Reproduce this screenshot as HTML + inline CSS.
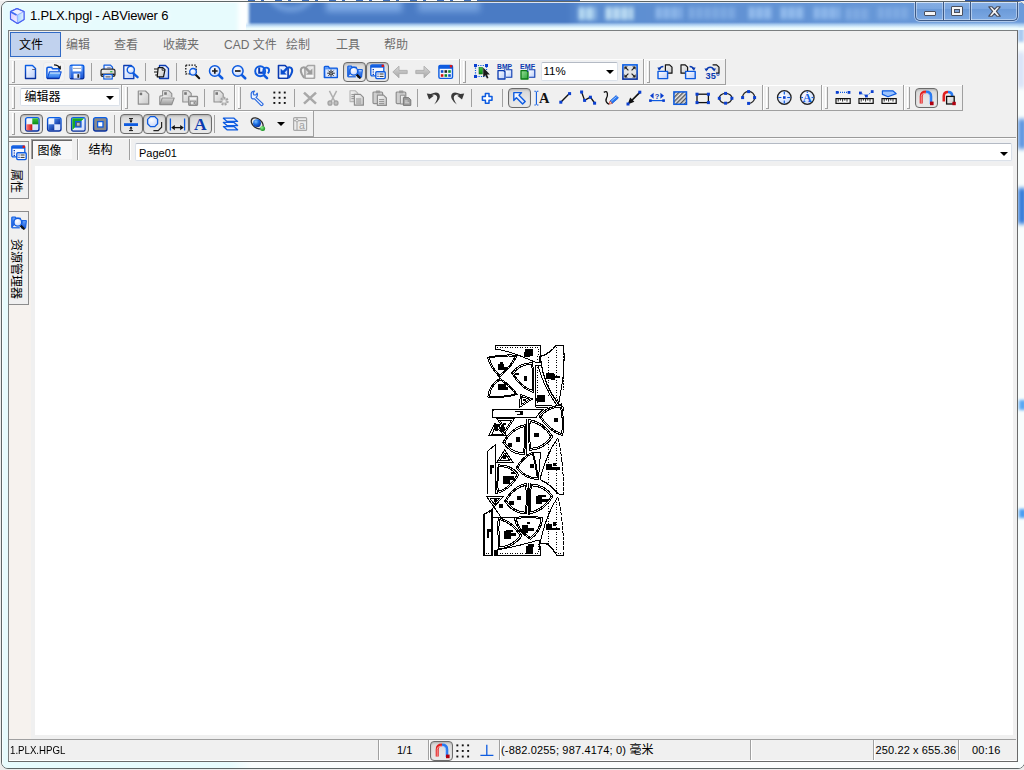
<!DOCTYPE html>
<html lang="zh-CN">
<head>
<meta charset="utf-8">
<title>1.PLX.hpgl - ABViewer 6</title>
<style>
*{box-sizing:border-box;margin:0;padding:0}
html,body{width:1024px;height:770px;overflow:hidden;background:#ececec}
body{position:relative;font-family:"Liberation Sans","Noto Sans CJK SC",sans-serif;font-size:12px;color:#000}
.abs{position:absolute}
#desk{left:0;top:0;width:1024px;height:770px;overflow:hidden}
#win{left:1px;top:1px;width:1024px;height:768px;border:1px solid #5d6566;border-radius:7px;background:#e7fbfd;overflow:hidden}
#glass{left:0;top:0;width:1024px;height:30px;overflow:hidden;clip-path:inset(2px -1px 0 2px round 6px 6px 0 0)}
#client{left:8px;top:30px;width:1010px;height:732px;background:#f0f0f0;border:1px solid #7b7f80;border-right-color:#6a6a6a;border-bottom-color:#6a6a6a}
.t{position:absolute;white-space:nowrap;line-height:14px}
.cjk{font-family:"Liberation Sans","Noto Sans CJK SC",sans-serif}
.hl{position:absolute;height:1px}
.vl{position:absolute;width:1px}
.grip{position:absolute;width:3px;border-right:1px solid #a0a0a0;border-left:1px solid #fff}
.grip:after{content:"";position:absolute;left:-1px;bottom:0;width:3px;height:1px;background:#a0a0a0}
.sep{position:absolute;width:1px;height:18px;background:#a0a0a0}
.ic{position:absolute;width:16px;height:16px;overflow:visible}
.pb{position:absolute;border:1px solid #6b6b6b;border-radius:4px;background:linear-gradient(#d6d6d6,#e6e6e6 60%,#e9e9e9);box-shadow:inset 0 1px 2px rgba(0,0,0,.18)}
.combo{position:absolute;background:#fff;border:1px solid #dbe1e9;border-top-color:#b4bac4;border-radius:2px;box-shadow:0 0 0 1px #eef0f3}
.dd{position:absolute;width:0;height:0;border-left:4px solid transparent;border-right:4px solid transparent;border-top:4px solid #000}
.m{color:#6d6d6d;font-size:12px}
.st{font-size:11px}
.vt{writing-mode:vertical-rl;text-orientation:sideways;font-size:12px;line-height:14px;width:14px}
</style>
</head>
<body>
<div id="desk" class="abs">
 <!-- background desktop slivers -->
 <div class="abs" style="left:0;top:0;width:1024px;height:1px;background:#f8f8f8"></div><div class="abs" style="left:248px;top:0;width:332px;height:1px;background:repeating-linear-gradient(90deg,#3f6fba 0,#3f6fba 7px,#fff 7px,#fff 13px,#3f6fba 13px,#3f6fba 16px,#fff 16px,#fff 27px)"></div><div class="abs" style="left:480px;top:0;width:100px;height:1px;background:#3f6fba"></div><div class="abs" style="left:965px;top:0;width:59px;height:1px;background:#2a56a8"></div>
</div>
<div id="win" class="abs">
 <div class="abs" style="left:0;top:756px;width:1023px;height:10px;background:linear-gradient(90deg,#e7fbfd 0,#e7fbfd 228px,#fafdfd 250px,#fcfdfd 100%)"></div>
 <div class="abs" style="left:1014px;top:26px;width:9px;height:740px;background:#f8fdfd"></div>
 <div class="abs" style="left:1016px;top:24px;width:6px;height:16px;background:#a8c8f0;filter:blur(1.5px)"></div>
 <div class="abs" style="left:1016px;top:50px;width:6px;height:36px;background:#d4def6;filter:blur(2px)"></div>
 <div class="abs" style="left:1016px;top:117px;width:8px;height:30px;background:#5a93e0;filter:blur(2px)"></div>
 <div class="abs" style="left:1016px;top:186px;width:8px;height:36px;background:#2f78d8;filter:blur(2px)"></div>
 <div class="abs" style="left:1017px;top:398px;width:7px;height:10px;background:#5aa8f4;filter:blur(1.5px)"></div>
 <div class="abs" style="left:1017px;top:507px;width:7px;height:9px;background:#4a9ef2;filter:blur(1.5px)"></div>
 <div class="abs" style="left:0;top:0;width:1px;height:766px;background:rgba(255,255,255,.8)"></div>
</div>
<div id="glass" class="abs">
  <!-- blurred blue window seen through aero glass -->
  <div class="abs" style="left:238px;top:-4px;width:12px;height:40px;background:#fdffff;filter:blur(2px)"></div>
  <div class="abs" style="left:249px;top:-6px;width:800px;height:31px;background:linear-gradient(90deg,#4a7bc4 0,#4a7bc4 318px,#5c8dd0 332px,#6c9cdb 100%);filter:blur(1.6px)"></div>
  <div class="abs" style="left:268px;top:-22px;width:46px;height:34px;border:6px solid #7ba7e2;border-radius:50%;filter:blur(2.5px);opacity:.8"></div>
  <div class="abs" style="left:326px;top:-2px;width:76px;height:14px;background:#86b1ea;filter:blur(3px);opacity:.85"></div>
  <div class="abs" style="left:418px;top:-2px;width:62px;height:14px;background:#7faae4;filter:blur(3px);opacity:.8"></div>
  <div class="abs" style="left:579px;top:7px;width:17px;height:13px;background:repeating-linear-gradient(90deg,#d8f6ff 0,#d8f6ff 3px,transparent 3px,transparent 4.500px,#d8f6ff 4.500px,#d8f6ff 6px,transparent 6px,transparent 8px);filter:blur(2.100px)"></div>
  <div class="abs" style="left:606px;top:7px;width:28px;height:13px;background:repeating-linear-gradient(90deg,#def8ff 0,#def8ff 3px,transparent 3px,transparent 4.500px,#def8ff 4.500px,#def8ff 6px,transparent 6px,transparent 8px);filter:blur(2.100px)"></div>
  <div class="abs" style="left:656px;top:7px;width:26px;height:12px;background:repeating-linear-gradient(90deg,#9cc3f2 0,#9cc3f2 3px,transparent 3px,transparent 4.500px,#9cc3f2 4.500px,#9cc3f2 6px,transparent 6px,transparent 8px);filter:blur(2.300px)"></div>
  <div class="abs" style="left:689px;top:7px;width:46px;height:12px;background:repeating-linear-gradient(90deg,#86b0e6 0,#86b0e6 3px,transparent 3px,transparent 4.500px,#86b0e6 4.500px,#86b0e6 6px,transparent 6px,transparent 8px);filter:blur(2.300px)"></div>
  <div class="abs" style="left:749px;top:7px;width:22px;height:12px;background:repeating-linear-gradient(90deg,#a3c9f5 0,#a3c9f5 3px,transparent 3px,transparent 4.500px,#a3c9f5 4.500px,#a3c9f5 6px,transparent 6px,transparent 8px);filter:blur(2.300px)"></div>
  <div class="abs" style="left:781px;top:7px;width:24px;height:12px;background:repeating-linear-gradient(90deg,#a3c9f5 0,#a3c9f5 3px,transparent 3px,transparent 4.500px,#a3c9f5 4.500px,#a3c9f5 6px,transparent 6px,transparent 8px);filter:blur(2.300px)"></div>
  <div class="abs" style="left:814px;top:7px;width:26px;height:12px;background:repeating-linear-gradient(90deg,#9cc3f2 0,#9cc3f2 3px,transparent 3px,transparent 4.500px,#9cc3f2 4.500px,#9cc3f2 6px,transparent 6px,transparent 8px);filter:blur(2.300px)"></div>
  <div class="abs" style="left:846px;top:8px;width:24px;height:12px;background:repeating-linear-gradient(90deg,#86b0e6 0,#86b0e6 3px,transparent 3px,transparent 4.500px,#86b0e6 4.500px,#86b0e6 6px,transparent 6px,transparent 8px);filter:blur(2.300px)"></div>
  <div class="abs" style="left:878px;top:7px;width:32px;height:12px;background:repeating-linear-gradient(90deg,#86b0e6 0,#86b0e6 3px,transparent 3px,transparent 4.500px,#86b0e6 4.500px,#86b0e6 6px,transparent 6px,transparent 8px);filter:blur(2.300px)"></div>
  <!-- bottom fade of glass -->
  <div class="abs" style="left:246px;top:22px;width:780px;height:8px;background:linear-gradient(rgba(232,249,250,0),rgba(190,220,248,.7) 45%,#eefcfd 82%)"></div>
  <div class="abs" style="left:0;top:2px;width:1024px;height:1px;background:rgba(255,255,255,.8)"></div>
  <!-- caption buttons -->
  <div class="abs" style="left:915px;top:-1px;width:103px;height:22px;border:1px solid #3e5a85;border-top:none;border-radius:0 0 5px 5px;background:linear-gradient(rgba(200,222,250,.35),rgba(160,195,240,.35) 45%,rgba(110,155,215,.3) 50%,rgba(150,190,240,.4));box-shadow:0 0 0 1px rgba(255,255,255,.45),inset 0 0 0 1px rgba(255,255,255,.4)"></div>
  <div class="abs" style="left:943px;top:0;width:1px;height:20px;background:#3e5a85;box-shadow:1px 0 0 rgba(255,255,255,.45),-1px 0 0 rgba(255,255,255,.35)"></div>
  <div class="abs" style="left:970px;top:0;width:1px;height:20px;background:#3e5a85;box-shadow:1px 0 0 rgba(255,255,255,.45),-1px 0 0 rgba(255,255,255,.35)"></div>
  <div class="abs" style="left:924px;top:11px;width:12px;height:5px;background:#f6f6f6;border:1px solid #4a4f5e;border-radius:1px"></div>
  <div class="abs" style="left:951px;top:6px;width:12px;height:10px;border:1px solid #4a4f5e;border-radius:1px;background:#f6f6f6"><div class="abs" style="left:2px;top:2px;width:6px;height:4px;border:1px solid #4a4f5e;background:#7da2d8"></div></div>
  <svg class="abs" style="left:988px;top:6px" width="13" height="11" viewBox="0 0 13 11"><path d="M.8 .8h3.400L6.500 3.300 8.800 .8h3.400L8.400 5.400l3.800 4.800H8.800L6.500 7.500 4.200 10.200H.8l3.800-4.800z" fill="#f4f4f4" stroke="#454a5a" stroke-width="1.100" stroke-linejoin="round"/></svg>
</div>
<div id="client" class="abs"></div>
<svg class="abs" style="left:8px;top:7px" width="18" height="18" viewBox="0 0 18 18">
 <defs><linearGradient id="cb1" x1="0" y1="0" x2="1" y2="1"><stop offset="0" stop-color="#d9c8ff"/><stop offset="1" stop-color="#f6f4ff"/></linearGradient>
 <linearGradient id="cb2" x1="0" y1="0" x2="1" y2="0"><stop offset="0" stop-color="#9fd2ff"/><stop offset="1" stop-color="#e6f2ff"/></linearGradient></defs>
 <path d="M9 1.5 16 4.5 16 12.5 9.5 16.5 2.5 12 2.5 4.5z" fill="#eef0ff" stroke="#4a63f2" stroke-width="1.1" stroke-linejoin="round"/>
 <path d="M2.5 4.5 9.2 8 9.5 16.5 2.5 12z" fill="url(#cb1)"/>
 <path d="M9.2 8 16 4.5 16 12.5 9.5 16.5z" fill="url(#cb2)"/>
 <path d="M2.5 4.5 9.2 8 16 4.5M9.2 8 9.5 16.5" fill="none" stroke="#8aa0ff" stroke-width=".8"/>
 <path d="M9 1.5 16 4.5 16 12.5 9.5 16.5 2.5 12 2.5 4.5z" fill="none" stroke="#4a63f2" stroke-width="1.1" stroke-linejoin="round"/>
 <path d="M3 5 8.5 8" stroke="#3f6df0" stroke-width="1.6"/>
</svg>
<div class="t" id="ttl" style="left:30px;top:8px;font-size:13px;letter-spacing:-.17px;line-height:15px;color:#000;text-shadow:0 0 4px #fff,0 0 6px #fff">1.PLX.hpgl - ABViewer 6</div>
<div id="menubar">
 <div class="abs" style="left:10px;top:32px;width:51px;height:25px;background:#c1d2ee;border:1px solid #316ac5"></div>
 <div class="t m" style="left:19px;top:38px;color:#000">文件</div>
 <div class="t m" style="left:66px;top:38px">编辑</div>
 <div class="t m" style="left:114px;top:38px">查看</div>
 <div class="t m" style="left:163px;top:38px">收藏夹</div>
 <div class="t m" style="left:224px;top:38px">CAD 文件</div>
 <div class="t m" style="left:286px;top:38px">绘制</div>
 <div class="t m" style="left:336px;top:38px">工具</div>
 <div class="t m" style="left:384px;top:38px">帮助</div>
</div>
<div id="tb">
<div class="hl" style="left:9px;top:59px;width:716px;background:#fdfdfd"></div>
<div class="hl" style="left:9px;top:84px;width:717px;background:#a0a0a0"></div>
<div class="hl" style="left:9px;top:85px;width:953px;background:#fff"></div>
<div class="hl" style="left:9px;top:110px;width:954px;background:#a0a0a0"></div>
<div class="hl" style="left:9px;top:111px;width:304px;background:#fff"></div>
<div class="hl" style="left:9px;top:136px;width:305px;background:#a0a0a0"></div>
<div class="hl" style="left:9px;top:137px;width:1007px;background:#9a9a9a"></div>
<div class="grip" style="left:12px;top:61px;height:22px"></div>
<div class="grip" style="left:463px;top:61px;height:22px"></div>
<div class="grip" style="left:647px;top:61px;height:22px"></div>
<div class="vl" style="left:459px;top:59px;height:25px;background:#a0a0a0"></div>
<div class="vl" style="left:460px;top:59px;height:25px;background:#fff"></div>
<div class="vl" style="left:643px;top:59px;height:25px;background:#a0a0a0"></div>
<div class="vl" style="left:644px;top:59px;height:25px;background:#fff"></div>
<div class="vl" style="left:725px;top:59px;height:25px;background:#a0a0a0"></div>



<div class="sep" style="left:91px;top:63px"></div>
<div class="sep" style="left:145px;top:63px"></div>
<div class="sep" style="left:176px;top:63px"></div>
<div class="grip" style="left:12px;top:87px;height:22px"></div>
<div class="grip" style="left:125px;top:87px;height:22px"></div>
<div class="grip" style="left:238px;top:87px;height:22px"></div>
<div class="grip" style="left:766px;top:87px;height:22px"></div>
<div class="grip" style="left:825px;top:87px;height:22px"></div>
<div class="grip" style="left:907px;top:87px;height:22px"></div>
<div class="vl" style="left:121px;top:85px;height:25px;background:#a0a0a0"></div>
<div class="vl" style="left:122px;top:85px;height:25px;background:#fff"></div>
<div class="vl" style="left:234px;top:85px;height:25px;background:#a0a0a0"></div>
<div class="vl" style="left:235px;top:85px;height:25px;background:#fff"></div>
<div class="vl" style="left:762px;top:85px;height:25px;background:#a0a0a0"></div>
<div class="vl" style="left:763px;top:85px;height:25px;background:#fff"></div>
<div class="vl" style="left:821px;top:85px;height:25px;background:#a0a0a0"></div>
<div class="vl" style="left:822px;top:85px;height:25px;background:#fff"></div>
<div class="vl" style="left:903px;top:85px;height:25px;background:#a0a0a0"></div>
<div class="vl" style="left:904px;top:85px;height:25px;background:#fff"></div>
<div class="vl" style="left:962px;top:85px;height:25px;background:#a0a0a0"></div>

<div class="sep" style="left:204px;top:89px"></div>
<div class="sep" style="left:294px;top:89px"></div>
<div class="sep" style="left:417px;top:89px"></div>
<div class="sep" style="left:471px;top:89px"></div>
<div class="sep" style="left:502px;top:89px"></div>
<div class="grip" style="left:12px;top:113px;height:22px"></div>
<div class="vl" style="left:313px;top:111px;height:26px;background:#a0a0a0"></div>

<div class="sep" style="left:114px;top:115px"></div>
<div class="sep" style="left:214px;top:115px"></div>
<div class="pb" style="left:343px;top:62px;width:23px;height:20px"></div>
<div class="pb" style="left:366px;top:62px;width:23px;height:20px"></div>
<div class="pb" style="left:508px;top:88px;width:23px;height:20px"></div>
<div class="pb" style="left:915px;top:88px;width:23px;height:20px"></div>
<div class="pb" style="left:20px;top:114px;width:23px;height:20px"></div>
<div class="pb" style="left:66px;top:114px;width:23px;height:20px"></div>
<div class="pb" style="left:120px;top:114px;width:23px;height:20px"></div>
<div class="pb" style="left:143px;top:114px;width:23px;height:20px"></div>
<div class="pb" style="left:166px;top:114px;width:23px;height:20px"></div>
<div class="pb" style="left:189px;top:114px;width:23px;height:20px"></div>
<div class="combo" style="left:541px;top:62px;width:77px;height:19px"></div><div class="t" style="left:543.500px;top:64px;font-size:11.500px">11%</div><div class="dd" style="left:606px;top:70px"></div>
<div class="combo" style="left:20px;top:88px;width:100px;height:18px"></div><div class="t cjk" style="left:24.5px;top:90px;font-size:12px">编辑器</div><div class="dd" style="left:106px;top:96px"></div>
<div class="dd" style="left:277px;top:122px"></div>
</div>
<!--ICONS-->
<svg width="0" height="0" style="position:absolute"><defs>
<linearGradient id="gp" x1="0" y1="0" x2="1" y2="1"><stop offset="0" stop-color="#fff"/><stop offset="1" stop-color="#b9cdfa"/></linearGradient>
<linearGradient id="gb" x1="0" y1="0" x2="0" y2="1"><stop offset="0" stop-color="#0a5fe8"/><stop offset="1" stop-color="#082f9c"/></linearGradient>
<linearGradient id="gf" x1="0" y1="0" x2="0" y2="1"><stop offset="0" stop-color="#6aa7ff"/><stop offset="1" stop-color="#1552d4"/></linearGradient>
<linearGradient id="gg" x1="0" y1="0" x2="1" y2="1"><stop offset="0" stop-color="#f6f6f6"/><stop offset="1" stop-color="#c9c9c9"/></linearGradient>
<linearGradient id="gk" x1="0" y1="0" x2="0" y2="1"><stop offset="0" stop-color="#d9d9d9"/><stop offset="1" stop-color="#9a9a9a"/></linearGradient>
<radialGradient id="gl" cx=".4" cy=".35" r=".7"><stop offset="0" stop-color="#fff"/><stop offset="1" stop-color="#c5d6fb"/></radialGradient>
<radialGradient id="gball" cx=".35" cy=".3" r=".75"><stop offset="0" stop-color="#7fc0ff"/><stop offset=".5" stop-color="#1668e0"/><stop offset="1" stop-color="#0a2f9a"/></radialGradient>
<radialGradient id="ggreen" cx=".35" cy=".3" r=".75"><stop offset="0" stop-color="#8cf08c"/><stop offset="1" stop-color="#0a8a14"/></radialGradient>
<linearGradient id="gred" x1="0" y1="0" x2="1" y2="0"><stop offset="0" stop-color="#ff7a7a"/><stop offset="1" stop-color="#c81010"/></linearGradient>
<linearGradient id="ggrn" x1="0" y1="0" x2="0" y2="1"><stop offset="0" stop-color="#3cc43c"/><stop offset="1" stop-color="#0a8a14"/></linearGradient>
<linearGradient id="gblu" x1="0" y1="0" x2="1" y2="1"><stop offset="0" stop-color="#4a86e8"/><stop offset="1" stop-color="#0a2f9a"/></linearGradient>
<linearGradient id="gwh" x1="0" y1="0" x2="1" y2="1"><stop offset="0" stop-color="#fff"/><stop offset="1" stop-color="#cfdcfb"/></linearGradient>
<linearGradient id="garr" x1="0" y1="0" x2="0" y2="1"><stop offset="0" stop-color="#d8d8d8"/><stop offset="1" stop-color="#a6a6a6"/></linearGradient>
<pattern id="hat" width="3" height="3" patternUnits="userSpaceOnUse" patternTransform="rotate(-45)"><rect width="3" height="3" fill="#e8e8e8"/><rect width="3" height="1.4" fill="#555"/></pattern>
<linearGradient id="gf2" x1="0" y1="0" x2="0" y2="1"><stop offset="0" stop-color="#7cc0ff"/><stop offset="1" stop-color="#2a70e8"/></linearGradient><linearGradient id="ggrn2" x1="0" y1="0" x2="1" y2="1"><stop offset="0" stop-color="#9be09b"/><stop offset="1" stop-color="#2aa43a"/></linearGradient></defs></svg>
<div id="icons">
<svg class="ic" style="left:23px;top:64px" width="16" height="16" viewBox="0 0 16 16"><path d="M2.5 1.5h7l3 3v10h-10z" fill="url(#gp)" stroke="url(#gb)" stroke-width="1.4" stroke-linejoin="round"/><path d="M9.2 5.5h3" stroke="#556" stroke-width=".9"/></svg>
<div class="abs" style="left:43px;top:62px;width:22px;height:20px;border:1px solid #ebebeb;border-radius:3px;background:#f3f3f3"></div>
<svg class="ic" style="left:46px;top:64px" width="16" height="16" viewBox="0 0 16 16"><path d="M8 .9q4.400 .1 5.600 3.200" stroke="#111" stroke-width="1.400" fill="none"/><path d="M15 5.600 10.600 4.900 14.700 1.500z" fill="#111"/><path d="M.9 14.200V4.400q0-1.200 1.200-1.200h3.400l1.200 1.600h5.400q1 0 1 1v1.600" fill="#e4edff" stroke="#0d5be0" stroke-width="1.500" stroke-linejoin="round"/><path d="M1.400 14.300 3.400 7.900h11.800l-2 6.400z" fill="url(#gf2)" stroke="#0d50d8" stroke-width="1.100" stroke-linejoin="round"/><path d="M.9 14.500h12.300" stroke="#0a2fa0" stroke-width="1.400"/><path d="M4 9h10.200" stroke="#eaf4ff" stroke-width=".9"/></svg>
<svg class="ic" style="left:69px;top:64px" width="16" height="16" viewBox="0 0 16 16"><rect x="1.2" y="1.2" width="13.6" height="13.6" rx="1.4" fill="url(#gf)" stroke="url(#gb)" stroke-width="1.4"/><path d="M1.2 2v12" stroke="#9cc0ff" stroke-width=".8"/><rect x="3.6" y="1.8" width="8.8" height="5.6" fill="#fff"/><path d="M4 4.4h8" stroke="#8a8f9c" stroke-width=".8"/><rect x="4.6" y="9.6" width="6.6" height="5" fill="url(#gp)"/><rect x="8.4" y="10.2" width="1.8" height="3.6" fill="#222"/></svg>
<svg class="ic" style="left:100px;top:64px" width="16" height="16" viewBox="0 0 16 16"><path d="M4 5.5V1.2h6.5l2 2V5.5" fill="url(#gp)" stroke="#0d5be0" stroke-width="1.2" stroke-linejoin="round"/><path d="M1 7.2q0-2 2-2h10q2 0 2 2v3.6q0 1.6-2 1.6H3q-2 0-2-1.600z" fill="url(#gg)" stroke="#2a2a2a" stroke-width="1.2"/><path d="M1.4 10.400h13.200" stroke="#111" stroke-width="1.6"/><rect x="10.2" y="7.200" width="2.2" height="1.1" fill="#18b030"/><path d="M7.200 3.800h3.400" stroke="#667" stroke-width=".8"/><rect x="3.8" y="10.600" width="8.4" height="4.400" fill="#fff" stroke="#0d5be0" stroke-width="1.2"/><path d="M5.400 12.900h5.200" stroke="#445" stroke-width="1.1"/></svg>
<svg class="ic" style="left:123px;top:64px" width="16" height="16" viewBox="0 0 16 16"><path d="M.8 1.500h7.400l2.600 2.600v10.600h-10z" fill="url(#gp)" stroke="#0a3ab0" stroke-width="1.300" stroke-linejoin="round"/><path d="M9.800 8.800 14.600 13.200" stroke="#0d5be0" stroke-width="2.300" stroke-linecap="round"/><circle cx="7.800" cy="5.800" r="3.600" fill="url(#gl)" stroke="#0d5be0" stroke-width="1.400"/></svg>
<svg class="ic" style="left:154px;top:64px" width="16" height="16" viewBox="0 0 16 16"><path d="M5.500 1.500h6l3 3v10h-9z" fill="url(#gp)" stroke="#0a3ab0" stroke-width="1.300" stroke-linejoin="round"/><path d="M0 5h4.500M0 8h4M1.200 11h3" stroke="#111" stroke-width="1.200"/><path d="M4.200 3.600h4.600l2.200 2-1.500 7.200H3.200z" fill="url(#gg)" stroke="#111" stroke-width="1.200" stroke-linejoin="round"/><path d="M8.300 3.900 8 6.200h2.600" fill="none" stroke="#111" stroke-width=".8"/></svg>
<svg class="ic" style="left:185px;top:64px" width="16" height="16" viewBox="0 0 16 16"><rect x=".8" y="1.200" width="10.400" height="8.600" fill="none" stroke="#111" stroke-width="1.300" stroke-dasharray="1.500 1.300"/><path d="M10 10 14.200 14.200" stroke="#111" stroke-width="2" stroke-linecap="round"/><circle cx="8" cy="7.800" r="3.300" fill="url(#gl)" stroke="#0d5be0" stroke-width="1.300"/></svg>
<svg class="ic" style="left:208px;top:64px" width="16" height="16" viewBox="0 0 16 16"><path d="M10.400 10.600 14.200 14.300" stroke="#0d5be0" stroke-width="2.600" stroke-linecap="round"/><circle cx="6.800" cy="7" r="5.300" fill="url(#gl)" stroke="#0d5be0" stroke-width="1.500"/><path d="M4 7h5.600M6.800 4.200v5.600" stroke="#1a1a1a" stroke-width="1.700"/></svg>
<svg class="ic" style="left:231px;top:64px" width="16" height="16" viewBox="0 0 16 16"><path d="M10.400 10.600 14.200 14.300" stroke="#0d5be0" stroke-width="2.600" stroke-linecap="round"/><circle cx="6.800" cy="7" r="5.300" fill="url(#gl)" stroke="#0d5be0" stroke-width="1.500"/><path d="M4 7h5.600" stroke="#1a1a1a" stroke-width="1.700"/></svg>
<svg class="ic" style="left:254px;top:64px" width="16" height="16" viewBox="0 0 16 16"><path d="M9.600 10.800 13 14.200" stroke="#0d5be0" stroke-width="2.600" stroke-linecap="round"/><circle cx="6.200" cy="7.200" r="5" fill="url(#gl)" stroke="#0d5be0" stroke-width="1.900"/><path d="M5.200 3.600v5.200h4.600" fill="none" stroke="#0a3ab0" stroke-width="2"/><path d="M9.400 9V6.400q0-2.800 2.900-2.800 2.800 0 2.800 2.800 0 1.600-1.400 3" fill="none" stroke="#0d5be0" stroke-width="1.900"/><path d="M7.600 7.400h3.600l-1.800 2.800z" fill="#0d5be0"/></svg>
<svg class="ic" style="left:277px;top:64px" width="16" height="16" viewBox="0 0 16 16"><g ><path d="M1.500 1.500h6.600l3 3v9.600h-9.600z" fill="url(#gp)" stroke="#0a3ab0" stroke-width="1.600" stroke-linejoin="round"/><rect x="2.600" y="11" width="7.400" height="2.600" fill="#fff" opacity=".75"/><path d="M3.600 4.600v6h6z" fill="#0b4fd0"/><path d="M5.400 8.800 9.600 4.800" stroke="#0b4fd0" stroke-width="2.400"/><path d="M9 5.600q1.400-2.600 3.800-2.200 2.600 .6 2.400 3.600-.2 2.600-3.400 6.800" fill="none" stroke="#0b4fd0" stroke-width="2"/></g></svg>
<svg class="ic" style="left:300px;top:64px" width="16" height="16" viewBox="0 0 16 16"><g transform="translate(16,0) scale(-1,1)"><path d="M1.500 1.500h6.600l3 3v9.600h-9.600z" fill="url(#gg)" stroke="#a6a6a6" stroke-width="1.600" stroke-linejoin="round"/><rect x="2.600" y="11" width="7.400" height="2.600" fill="#fff" opacity=".75"/><path d="M3.600 4.600v6h6z" fill="#9c9c9c"/><path d="M5.400 8.800 9.600 4.800" stroke="#9c9c9c" stroke-width="2.400"/><path d="M9 5.600q1.400-2.600 3.800-2.200 2.600 .6 2.400 3.600-.2 2.600-3.400 6.800" fill="none" stroke="#9c9c9c" stroke-width="2"/></g></svg>
<svg class="ic" style="left:323px;top:64px" width="16" height="16" viewBox="0 0 16 16"><path d="M1.300 13.600V3.200q0-.8 .8-.8h3.200l1.200 1.800h7.100q.8 0 .8 .8v8.600z" fill="url(#gf)" stroke="#0d5be0" stroke-width="1.300" stroke-linejoin="round"/><rect x="2.400" y="5.400" width="11.200" height="7.400" fill="#e6efff" opacity=".95"/><path d="M8 5.600v7.200M4.200 9.200h7.600M5.400 6.600l5.200 5.200M10.600 6.600 5.400 11.800" stroke="#111" stroke-width=".9"/><circle cx="8" cy="9.200" r="1.100" fill="#fff" stroke="#111" stroke-width=".7"/></svg>
<svg class="ic" style="left:347px;top:64px" width="16" height="16" viewBox="0 0 16 16"><path d="M.8 12.800V3q0-1 1-1h2.400l1 1.400h4.600" fill="url(#gf)" stroke="#0d5be0" stroke-width="1.200"/><path d="M.8 12.800h8" stroke="#0d5be0" stroke-width="1.200"/><path d="M11 5.600h4.400l-.8 7.600h-4z" fill="url(#gf)" stroke="#0d5be0" stroke-width="1"/><path d="M11.600 6.800h3" stroke="#cfe2ff" stroke-width=".9"/><path d="M9.400 10.400 12.800 13.800" stroke="#111" stroke-width="2.200" stroke-linecap="round"/><circle cx="6.800" cy="7.200" r="3.900" fill="url(#gl)" stroke="#0d5be0" stroke-width="1.400"/></svg>
<svg class="ic" style="left:370px;top:64px" width="16" height="16" viewBox="0 0 16 16"><rect x=".8" y=".8" width="13" height="11" rx="1.200" fill="#f4f8ff" stroke="#0d5be0" stroke-width="1.300"/><path d="M.8 2.400h13" stroke="#0d5be0" stroke-width="2.600"/><rect x="11.600" y=".6" width="2.400" height="2.400" fill="#e01818"/><path d="M2.600 5.600h1.400M2.600 8h1.400M2.600 10.400h1.400" stroke="#0a3ab0" stroke-width="1.200"/><rect x="5.800" y="7.800" width="9.400" height="6.800" rx="1" fill="#f4f8ff" stroke="#0d5be0" stroke-width="1.400"/><path d="M7.400 10h1.200M7.400 12.400h1.200" stroke="#0a3ab0" stroke-width="1.200"/><path d="M9.600 10h4M9.600 12.400h4" stroke="#333" stroke-width="1"/></svg>
<svg class="ic" style="left:392px;top:64px" width="16" height="16" viewBox="0 0 16 16"><path d="M.8 8 7 2.200v4.200h8.200v3.200H7v4.200z" fill="url(#garr)" stroke="#adadad" stroke-width=".9" stroke-linejoin="round"/></svg>
<svg class="ic" style="left:415px;top:64px" width="16" height="16" viewBox="0 0 16 16"><path d="M15.200 8 9 2.200v4.200H.8v3.200H9v4.200z" fill="url(#garr)" stroke="#adadad" stroke-width=".9" stroke-linejoin="round"/></svg>
<svg class="ic" style="left:438px;top:64px" width="16" height="16" viewBox="0 0 16 16"><rect x=".9" y="1.400" width="13.600" height="13" rx="1.400" fill="#f4f8ff" stroke="#0d5be0" stroke-width="1.400"/><path d="M1 3.200h13.400" stroke="#0d5be0" stroke-width="3.200"/><rect x="11.800" y="1" width="2.400" height="2.400" fill="#e01818"/><rect x="2.800" y="6.200" width="2.600" height="2.600" fill="#0a50c8"/><rect x="6.500" y="6.200" width="2.600" height="2.600" fill="#222"/><rect x="10.200" y="6.200" width="2.600" height="2.600" fill="#0a8a2a"/><rect x="2.800" y="10.200" width="2.600" height="2.600" fill="#d01010"/><rect x="6.500" y="10.200" width="2.600" height="2.600" fill="#0a8a2a"/><rect x="10.200" y="10.200" width="2.600" height="2.600" fill="#0a50c8"/></svg>
<svg class="ic" style="left:474px;top:64px" width="16" height="16" viewBox="0 0 16 16"><rect x="1.500" y="1.500" width="11" height="11" fill="none" stroke="#0d5be0" stroke-width="1.200" stroke-dasharray="1.200 1.200"/><rect x="0" y="0" width="3" height="3" fill="#0a3fd0"/><rect x="11" y="0" width="3" height="3" fill="#0a3fd0"/><rect x="0" y="11" width="3" height="3" fill="#0a3fd0"/><rect x="5" y="3.600" width="3.400" height="6.400" fill="url(#ggrn)" stroke="#0a6a14" stroke-width=".6"/><path d="M9.200 3.400v9.800l2.200-2 1.500 3.400 1.600-.7-1.500-3.300h2.900z" fill="#1a1a1a"/></svg>
<svg class="ic" style="left:497px;top:64px" width="16" height="16" viewBox="0 0 16 16"><text x="7.600" y="4.600" font-family="Liberation Sans,sans-serif" font-weight="bold" font-size="6.300" text-anchor="middle" fill="#0a3ab0" textLength="15" lengthAdjust="spacingAndGlyphs">BMP</text><path d="M9 5.800h5.800v7.400H9" fill="url(#gp)" stroke="#0a3ab0" stroke-width="1.100"/><path d="M1 6.600h5.600l1.400 1.400v7H1z" fill="url(#gp)" stroke="#0a3ab0" stroke-width="1.300" stroke-linejoin="round"/><path d="M7.800 5v3" stroke="#0a3ab0" stroke-width=".9"/></svg>
<svg class="ic" style="left:520px;top:64px" width="16" height="16" viewBox="0 0 16 16"><text x="7.600" y="4.600" font-family="Liberation Sans,sans-serif" font-weight="bold" font-size="6.300" text-anchor="middle" fill="#0a3ab0" textLength="15" lengthAdjust="spacingAndGlyphs">EMF</text><path d="M9 5.800h5.800v7.400H9" fill="url(#gp)" stroke="#0a3ab0" stroke-width="1.100"/><path d="M1 6.600h5.600l1.400 1.400v7H1z" fill="url(#ggrn2)" stroke="#0a7a14" stroke-width="1.300" stroke-linejoin="round"/><path d="M7.800 5v3" stroke="#0a3ab0" stroke-width=".9"/></svg>
<svg class="ic" style="left:622px;top:64px" width="16" height="16" viewBox="0 0 16 16"><rect x=".900" y=".900" width="14.200" height="14.200" fill="#e4e4e4" stroke="url(#gb)" stroke-width="1.600"/><path d="M3 3l3.400 3.400M13 3 9.600 6.400M3 13l3.400-3.400M13 13 9.600 9.600" stroke="#222" stroke-width="1.100"/><path d="M2.400 2.400h3.400L2.400 5.800zM13.600 2.400v3.400L10.200 2.400zM2.400 13.600v-3.400l3.400 3.400zM13.600 13.600h-3.400l3.400-3.400z" fill="#222"/></svg>
<svg class="ic" style="left:657px;top:64px" width="16" height="16" viewBox="0 0 16 16"><path d="M8.400 .8h4.200l2.400 2.400v6H8.400z" fill="url(#gg)" stroke="#111" stroke-width="1.200" stroke-linejoin="round"/><path d="M1 14.600V7.400h9.600v7.200z" fill="url(#gp)" stroke="#0d5be0" stroke-width="1.400" stroke-linejoin="round"/><path d="M6.400 2.400q-3.400 0-4 3" fill="none" stroke="#0a3ab0" stroke-width="1.500"/><path d="M.4 3.600h4.200L2 6.800z" fill="#0a3ab0"/></svg>
<svg class="ic" style="left:680px;top:64px" width="16" height="16" viewBox="0 0 16 16"><path d="M1 .8h4.200l2.400 2.400v6H1z" fill="url(#gg)" stroke="#111" stroke-width="1.200" stroke-linejoin="round"/><path d="M5.600 14.600V7.400h9.600v7.200z" fill="url(#gp)" stroke="#0d5be0" stroke-width="1.400" stroke-linejoin="round"/><path d="M9.600 2.400q3.400 0 4 3" fill="none" stroke="#0a3ab0" stroke-width="1.500"/><path d="M15.600 3.600h-4.200l2.600 3.200z" fill="#0a3ab0"/></svg>
<svg class="ic" style="left:704px;top:64px" width="16" height="16" viewBox="0 0 16 16"><path d="M8.600 .8h4l2.400 2.400v6h-3" fill="url(#gg)" stroke="#111" stroke-width="1.200" stroke-linejoin="round"/><path d="M2.600 6q1-2.800 3.600-2.800T9.800 6" fill="none" stroke="#0a3ab0" stroke-width="1.500"/><path d="M.4 4.400h4L2.200 7.400zM12 4.400H8l2.200 3z" fill="#0a3ab0"/><text x="8.600" y="15.200" font-family="Liberation Sans,sans-serif" font-weight="bold" font-size="8.400" text-anchor="middle" fill="#0a3ab0" textLength="14" lengthAdjust="spacingAndGlyphs">35°</text></svg>
<svg class="ic" style="left:136px;top:90px" width="16" height="16" viewBox="0 0 16 16"><path d="M2.3 1h7.2l3.200 3.200v10.0h-10.4z" fill="url(#gg)" stroke="#8f8f8f" stroke-width="1.200" stroke-linejoin="round"/><rect x="3.6" y="2.6" width="2.600" height="2.600" fill="#777"/></svg>
<svg class="ic" style="left:159px;top:90px" width="16" height="16" viewBox="0 0 16 16"><path d="M3.600 6V.8h6.400l2.800 2.800V7" fill="url(#gg)" stroke="#8f8f8f" stroke-width="1.100" stroke-linejoin="round"/><rect x="5.200" y="2.200" width="2.600" height="2.600" fill="#777"/><path d="M.8 14.400V6.800q0-1 1-1h1.800" fill="none" stroke="#8f8f8f" stroke-width="1.200"/><path d="M.9 14.600 3.200 8h12l-2.400 6.600z" fill="url(#gk)" stroke="#8f8f8f" stroke-width="1.100" stroke-linejoin="round"/></svg>
<svg class="ic" style="left:182px;top:90px" width="16" height="16" viewBox="0 0 16 16"><path d="M.8 .8h5.800l2.600 2.600V12H.8z" fill="url(#gg)" stroke="#8f8f8f" stroke-width="1.100" stroke-linejoin="round"/><rect x="2.200" y="2.200" width="2.600" height="2.600" fill="#777"/><rect x="6.600" y="6.400" width="9" height="9" rx=".8" fill="url(#gk)" stroke="#8f8f8f" stroke-width="1.100"/><rect x="8" y="7.600" width="6.200" height="2.200" fill="#f2f2f2"/><rect x="8.400" y="11.400" width="5.400" height="3.400" fill="#e6e6e6" stroke="#888" stroke-width=".6"/><rect x="11.600" y="12.200" width="1.200" height="1.600" fill="#666"/></svg>
<svg class="ic" style="left:213px;top:90px" width="16" height="16" viewBox="0 0 16 16"><path d="M1 .8h6.200l3 3V12H1z" fill="url(#gg)" stroke="#8f8f8f" stroke-width="1.100" stroke-linejoin="round"/><rect x="2.400" y="2.200" width="2.600" height="2.600" fill="#777"/><circle cx="11.200" cy="11.200" r="3.400" fill="#c9c9c9" stroke="#a4a4a4" stroke-width="2.200" stroke-dasharray="1.700 1.300"/><circle cx="11.200" cy="11.200" r="1.300" fill="#efefef"/></svg>
<svg class="ic" style="left:249px;top:90px" width="16" height="16" viewBox="0 0 16 16"><path d="M2.200 3.400q.6-2.400 3.400-2.400l-1.400 2 .6 1.800 2 .2 1.400-1.800q.8 2.800-1.200 4.200l6.800 6.200q.6 1-.4 1.800-.9.700-1.700-.200L5.600 8.800Q2 9.400 2.200 6.400z" fill="#f0f5ff" stroke="#2a6ae0" stroke-width="1.200" stroke-linejoin="round"/></svg>
<svg class="ic" style="left:272px;top:90px" width="16" height="16" viewBox="0 0 16 16"><rect x="1.4" y="1.6" width="1.900" height="1.900" fill="#111"/><rect x="1.4" y="6.800000000000001" width="1.900" height="1.900" fill="#111"/><rect x="1.4" y="12.0" width="1.900" height="1.900" fill="#111"/><rect x="6.6" y="1.6" width="1.900" height="1.900" fill="#111"/><rect x="6.6" y="6.800000000000001" width="1.900" height="1.900" fill="#111"/><rect x="6.6" y="12.0" width="1.900" height="1.900" fill="#111"/><rect x="11.8" y="1.6" width="1.900" height="1.900" fill="#111"/><rect x="11.8" y="6.800000000000001" width="1.900" height="1.900" fill="#111"/><rect x="11.8" y="12.0" width="1.900" height="1.900" fill="#111"/></svg>
<svg class="ic" style="left:302px;top:90px" width="16" height="16" viewBox="0 0 16 16"><path d="M2 2.600 14 13.600M14 2.600 2 13.600" stroke="#a8a8a8" stroke-width="2.600"/></svg>
<svg class="ic" style="left:325px;top:90px" width="16" height="16" viewBox="0 0 16 16"><path d="M4.400 .8 9.800 11.400M11.600 .8 6.200 11.400" stroke="#b0b0b0" stroke-width="1.500"/><ellipse cx="5" cy="13" rx="2" ry="2.200" fill="#bdbdbd" stroke="#a2a2a2" stroke-width="1.300"/><ellipse cx="11" cy="13" rx="2" ry="2.200" fill="#bdbdbd" stroke="#a2a2a2" stroke-width="1.300"/></svg>
<svg class="ic" style="left:348px;top:90px" width="16" height="16" viewBox="0 0 16 16"><path d="M2 .8h5.400l2.400 2.400v8.400H2z" fill="url(#gg)" stroke="#b5b5b5" stroke-width="1.100" stroke-linejoin="round"/><path d="M3.4 4.6h3" stroke="#8a8a8a" stroke-width=".9"/><path d="M3.4 6.6h3" stroke="#8a8a8a" stroke-width=".9"/><path d="M3.4 8.6h3" stroke="#8a8a8a" stroke-width=".9"/><path d="M6.400 4.400h6l3 3v7.800h-9z" fill="url(#gg)" stroke="#8f8f8f" stroke-width="1.200" stroke-linejoin="round"/><path d="M8 9h5.2" stroke="#8a8a8a" stroke-width=".9"/><path d="M8 11h5.2" stroke="#8a8a8a" stroke-width=".9"/><path d="M8 13h5.2" stroke="#8a8a8a" stroke-width=".9"/></svg>
<svg class="ic" style="left:371px;top:90px" width="16" height="16" viewBox="0 0 16 16"><rect x="2" y="2" width="9.600" height="11.600" rx="1" fill="#cfcfcf" stroke="#8f8f8f" stroke-width="1.200"/><rect x="4.800" y=".6" width="4.400" height="2.600" rx=".6" fill="#9a9a9a"/><path d="M6.400 5.200h6.200l2.800 2.800v7.400h-9z" fill="url(#gg)" stroke="#8f8f8f" stroke-width="1.200" stroke-linejoin="round"/><path d="M8 9.6h5.2" stroke="#8a8a8a" stroke-width=".9"/><path d="M8 11.6h5.2" stroke="#8a8a8a" stroke-width=".9"/><path d="M8 13.6h5.2" stroke="#8a8a8a" stroke-width=".9"/></svg>
<svg class="ic" style="left:395px;top:90px" width="16" height="16" viewBox="0 0 16 16"><rect x="1.200" y="2" width="9.600" height="11.600" rx="1" fill="#cfcfcf" stroke="#8f8f8f" stroke-width="1.200"/><rect x="4" y=".6" width="4.400" height="2.600" rx=".6" fill="#9a9a9a"/><path d="M5.400 5.200h4.400v8.800h-4.400z" fill="url(#gg)" stroke="#8f8f8f" stroke-width="1"/><path d="M8.400 7.600h5.200l2.200 2.200v5.600H8.400z" fill="#9c9c9c" stroke="#7a7a7a" stroke-width="1" stroke-linejoin="round"/><path d="M9.800 11h2.800M9.800 12.800h4.400" stroke="#e0e0e0" stroke-width=".9"/></svg>
<svg class="ic" style="left:426px;top:90px" width="16" height="16" viewBox="0 0 16 16"><path d="M.8 3.400l2.200 6 4.800-3.600-2-.8q3.400-1.400 5 1 1.600 2.600-2.600 8.400 7-5 5.400-9.600-1.800-4.200-9-.8z" fill="#3a3a3a"/></svg>
<svg class="ic" style="left:449px;top:90px" width="16" height="16" viewBox="0 0 16 16"><g transform="translate(16,0) scale(-1,1)"><path d="M.8 3.400l2.200 6 4.800-3.600-2-.8q3.400-1.400 5 1 1.600 2.600-2.600 8.400 7-5 5.400-9.600-1.800-4.200-9-.8z" fill="#3a3a3a"/></g></svg>
<svg class="ic" style="left:479px;top:90px" width="16" height="16" viewBox="0 0 16 16"><path d="M6.400 3.600h3.600v3h3v3.600h-3v3H6.400v-3h-3V6.600h3z" fill="#fff" stroke="#0d5be0" stroke-width="1.500" stroke-linejoin="round"/></svg>
<svg class="ic" style="left:511px;top:90px" width="16" height="16" viewBox="0 0 16 16"><path d="M2.800 2.600h7.800L8 5.200l6.200 6.200-2.600 2.600-6.200-6.200-2.600 2.600z" fill="url(#gwh)" stroke="#0d5be0" stroke-width="1.400" stroke-linejoin="round"/></svg>
<svg class="ic" style="left:534px;top:90px" width="16" height="16" viewBox="0 0 16 16"><path d="M2.400 1.400v13.400M.4 1.200h1.400M3 1.200h1.400M.4 15h1.400M3 15h1.400" stroke="#0d5be0" stroke-width="1.100" fill="none"/><text x="10.300" y="13.200" font-family="Liberation Serif,serif" font-weight="bold" font-size="14.500" text-anchor="middle" fill="#111">A</text></svg>
<svg class="ic" style="left:557px;top:90px" width="16" height="16" viewBox="0 0 16 16"><path d="M4 12 12.400 3.600" stroke="#111" stroke-width="1.400"/><rect x="2.3" y="10.7" width="3" height="3" fill="#0a3fd0"/><rect x="11.1" y="2.1" width="3" height="3" fill="#0a3fd0"/></svg>
<svg class="ic" style="left:580px;top:90px" width="16" height="16" viewBox="0 0 16 16"><path d="M1.600 2 4.600 10.400 10.400 7.200 14.600 13" fill="none" stroke="#111" stroke-width="1.300"/><rect x="0.10000000000000009" y="0.5" width="3" height="3" fill="#0a3fd0"/><rect x="3.0999999999999996" y="8.9" width="3" height="3" fill="#0a3fd0"/><rect x="8.9" y="5.7" width="3" height="3" fill="#0a3fd0"/><rect x="13.1" y="11.7" width="3" height="3" fill="#0a3fd0"/></svg>
<svg class="ic" style="left:603px;top:90px" width="16" height="16" viewBox="0 0 16 16"><path d="M.8 2.400q3-2 3.600 1.200.4 2.600-1 4.800-1.400 2.800 1.200 5l1.600 .800" fill="none" stroke="#111" stroke-width="1.300"/><path d="M7 11 13.200 5.600l2.200 2.400-6.200 5.400z" fill="#2a78f0" stroke="#0d5be0" stroke-width=".8"/><path d="M7 11l2.200 2.400-3.200 .800z" fill="#f2d8c0" stroke="#c04040" stroke-width=".7"/><path d="M8.200 11.200 13.600 6.600" stroke="#9cc8ff" stroke-width=".9"/></svg>
<svg class="ic" style="left:626px;top:90px" width="16" height="16" viewBox="0 0 16 16"><path d="M13.600 2.600 4.200 12" stroke="#111" stroke-width="1.700"/><path d="M1.600 14.400 4.200 7.600 8.400 11.800z" fill="#111"/><rect x="12.3" y="0.7000000000000002" width="3" height="3" fill="#0a3fd0"/><rect x="0.5" y="12.5" width="3" height="3" fill="#0a3fd0"/></svg>
<svg class="ic" style="left:649px;top:90px" width="16" height="16" viewBox="0 0 16 16"><path d="M1 5.800 4.600 2.800v6zM15 5.800 11.400 2.800v6z" fill="#0a3fd0"/><path d="M1.600 10.600h12.800" stroke="#0d5be0" stroke-width="1.200"/><rect x="0.09999999999999987" y="9.299999999999999" width="2.6" height="2.6" fill="#0a3fd0"/><rect x="13.299999999999999" y="9.299999999999999" width="2.6" height="2.6" fill="#0a3fd0"/><text x="8" y="8.600" font-family="Liberation Sans,sans-serif" font-weight="bold" font-size="7.500" text-anchor="middle" fill="#0a3ab0">?</text></svg>
<svg class="ic" style="left:672px;top:90px" width="16" height="16" viewBox="0 0 16 16"><rect x="1.900" y="1.900" width="12.600" height="12.400" fill="url(#hat)" stroke="#0d5be0" stroke-width="1.500"/></svg>
<svg class="ic" style="left:694px;top:90px" width="16" height="16" viewBox="0 0 16 16"><rect x="3" y="4.200" width="11.400" height="8.400" fill="none" stroke="#111" stroke-width="1.300"/><rect x="1.5" y="2.7" width="3" height="3" fill="#0a3fd0"/><rect x="12.9" y="2.7" width="3" height="3" fill="#0a3fd0"/><rect x="1.5" y="11.1" width="3" height="3" fill="#0a3fd0"/><rect x="12.9" y="11.1" width="3" height="3" fill="#0a3fd0"/></svg>
<svg class="ic" style="left:718px;top:90px" width="16" height="16" viewBox="0 0 16 16"><ellipse cx="7.600" cy="8.300" rx="6.300" ry="4.900" fill="none" stroke="#222" stroke-width="1.300"/><rect x="6.1" y="1.9" width="3" height="3" fill="#0a3fd0"/><rect x="6.1" y="11.7" width="3" height="3" fill="#0a3fd0"/><rect x="-0.19999999999999996" y="6.800000000000001" width="3" height="3" fill="#0a3fd0"/><rect x="12.4" y="6.800000000000001" width="3" height="3" fill="#0a3fd0"/></svg>
<svg class="ic" style="left:741px;top:90px" width="16" height="16" viewBox="0 0 16 16"><path d="M1.600 7.400A6 6 0 1 1 7.600 13.400" fill="none" stroke="#222" stroke-width="1.300"/><rect x="0.10000000000000009" y="6.1" width="3" height="3" fill="#0a3fd0"/><rect x="6.1" y="0.10000000000000009" width="3" height="3" fill="#0a3fd0"/><rect x="12.1" y="6.1" width="3" height="3" fill="#0a3fd0"/><rect x="6.1" y="11.9" width="3" height="3" fill="#0a3fd0"/></svg>
<svg class="ic" style="left:776px;top:90px" width="16" height="16" viewBox="0 0 16 16"><circle cx="8.300" cy="7.500" r="6.800" fill="url(#gl)" stroke="#222" stroke-width="1.300"/><path d="M8.300 1.400v3.200M8.300 10.400v3.200M2.200 7.500h3.200M11.200 7.500h3.200" stroke="#0d5be0" stroke-width="1.200"/><rect x="7.000000000000001" y="6.2" width="2.6" height="2.6" fill="#0a3fd0"/></svg>
<svg class="ic" style="left:799px;top:90px" width="16" height="16" viewBox="0 0 16 16"><circle cx="8.300" cy="7.500" r="6.800" fill="url(#gl)" stroke="#222" stroke-width="1.300"/><path d="M8.300 1.400v1.600M2.200 7.500h1.800M12.600 7.500h1.800" stroke="#0d5be0" stroke-width="1.100"/><text x="8.300" y="12" font-family="Liberation Serif,serif" font-weight="bold" font-size="12.500" text-anchor="middle" fill="#0d5be0">A</text></svg>
<svg class="ic" style="left:835px;top:90px" width="16" height="16" viewBox="0 0 16 16"><rect x="1" y="8.600" width="14.200" height="4.800" fill="#fff" stroke="#111" stroke-width="1.200"/><path d="M3.2 9v2.6" stroke="#111" stroke-width=".9"/><path d="M5.4 9v1.6" stroke="#111" stroke-width=".9"/><path d="M7.6000000000000005 9v2.6" stroke="#111" stroke-width=".9"/><path d="M9.8 9v1.6" stroke="#111" stroke-width=".9"/><path d="M12.0 9v2.6" stroke="#111" stroke-width=".9"/><path d="M3 2.400h10" stroke="#0d5be0" stroke-width="1.100" stroke-dasharray="1 1"/><rect x="0.8000000000000003" y="1.0" width="2.8" height="2.8" fill="#0a3fd0"/><rect x="12.6" y="1.0" width="2.8" height="2.8" fill="#0a3fd0"/></svg>
<svg class="ic" style="left:858px;top:90px" width="16" height="16" viewBox="0 0 16 16"><rect x="1" y="8.600" width="14.200" height="4.800" fill="#fff" stroke="#111" stroke-width="1.200"/><path d="M3.2 9v2.6" stroke="#111" stroke-width=".9"/><path d="M5.4 9v1.6" stroke="#111" stroke-width=".9"/><path d="M7.6000000000000005 9v2.6" stroke="#111" stroke-width=".9"/><path d="M9.8 9v1.6" stroke="#111" stroke-width=".9"/><path d="M12.0 9v2.6" stroke="#111" stroke-width=".9"/><path d="M2.600 3 8.400 6 14.200 1.600" fill="none" stroke="#0d5be0" stroke-width="1" stroke-dasharray="1 1"/><rect x="1.0" y="1.6" width="2.8" height="2.8" fill="#0a3fd0"/><rect x="7.0" y="4.6" width="2.8" height="2.8" fill="#0a3fd0"/><rect x="12.799999999999999" y="0.20000000000000018" width="2.8" height="2.8" fill="#0a3fd0"/></svg>
<svg class="ic" style="left:881px;top:90px" width="16" height="16" viewBox="0 0 16 16"><rect x="1" y="8.600" width="14.200" height="4.800" fill="#fff" stroke="#111" stroke-width="1.200"/><path d="M3.2 9v2.6" stroke="#111" stroke-width=".9"/><path d="M5.4 9v1.6" stroke="#111" stroke-width=".9"/><path d="M7.6000000000000005 9v2.6" stroke="#111" stroke-width=".9"/><path d="M9.8 9v1.6" stroke="#111" stroke-width=".9"/><path d="M12.0 9v2.6" stroke="#111" stroke-width=".9"/><path d="M1.400 .8h10.400l3.400 2.800L7 6.800 1.400 4.400z" fill="#9cc4ff" stroke="#0d5be0" stroke-width="1.200" stroke-linejoin="round"/></svg>
<svg class="ic" style="left:918px;top:90px" width="16" height="16" viewBox="0 0 16 16"><path d="M3.200 13.600V6.400q0-4.400 4.800-4.400" fill="none" stroke="#e02020" stroke-width="3"/><path d="M8 2q4.800 0 4.800 4.400v7.200" fill="none" stroke="#2a7af0" stroke-width="3"/><path d="M3.200 13.400V6.400q0-3.200 4.800-3.200" fill="none" stroke="#ffb0b0" stroke-width=".9"/><path d="M8 3.200q3.600 0 3.600 3.200v7" fill="none" stroke="#bcd8ff" stroke-width=".9"/><rect x="12" y="11.600" width="3.600" height="3.600" fill="#b00010"/></svg>
<svg class="ic" style="left:941px;top:90px" width="16" height="16" viewBox="0 0 16 16"><path d="M2.800 11.600V6q0-4 4.200-4" fill="none" stroke="#e02020" stroke-width="2.600"/><path d="M7 2q4.200 0 4.200 4v2" fill="none" stroke="#2a7af0" stroke-width="2.600"/><rect x="5.600" y="6.400" width="7.600" height="7.600" fill="url(#gg)" stroke="#111" stroke-width="1.300"/><rect x="11.400" y="11.800" width="3.400" height="3.400" fill="#b00010"/></svg>
<svg class="ic" style="left:24px;top:116px" width="16" height="16" viewBox="0 0 16 16"><rect x="1.600" y="1.600" width="13.400" height="13.400" rx="2" fill="url(#gwh)" stroke="url(#gb)" stroke-width="1.400"/><rect x="8.300" y="2.300" width="6" height="6" fill="url(#ggrn)"/><rect x="2.300" y="8.300" width="6" height="6" fill="url(#gred)"/></svg>
<svg class="ic" style="left:46px;top:116px" width="16" height="16" viewBox="0 0 16 16"><rect x="1.600" y="1.600" width="13.400" height="13.400" rx="2" fill="url(#gwh)" stroke="url(#gb)" stroke-width="1.400"/><rect x="8.300" y="2.300" width="6" height="6" fill="url(#gblu)"/><rect x="2.300" y="8.300" width="6" height="6" fill="url(#gblu)"/></svg>
<svg class="ic" style="left:70px;top:116px" width="16" height="16" viewBox="0 0 16 16"><rect x="1.600" y="1.600" width="13.400" height="13.400" rx="1.500" fill="#fff" stroke="url(#gb)" stroke-width="1.400"/><path d="M2.300 2.300h12L2.300 14.300z" fill="#18a828"/><path d="M14.300 2.300v12h-12z" fill="url(#gwh)"/><rect x="5.600" y="5.600" width="5.400" height="5.400" fill="#666" stroke="#0d5be0" stroke-width="1.200"/><rect x="7" y="7" width="2.600" height="2.600" fill="#bbb"/></svg>
<svg class="ic" style="left:92px;top:116px" width="16" height="16" viewBox="0 0 16 16"><rect x="1.600" y="1.600" width="13.400" height="13.400" rx="2" fill="#8a8a8a" stroke="url(#gb)" stroke-width="1.400"/><rect x="5.600" y="5.600" width="5.400" height="5.400" fill="#fff" stroke="#0d5be0" stroke-width="1.300"/></svg>
<svg class="ic" style="left:123px;top:116px" width="16" height="16" viewBox="0 0 16 16"><path d="M1 8.600h14" stroke="#0d5be0" stroke-width="2.800"/><path d="M8 3v3.400M8 14.200v-3.400" stroke="#111" stroke-width="1"/><path d="M6 2.600h4M6 14.600h4" stroke="#111" stroke-width="1"/><path d="M6.400 4.600h3.200L8 6.800zM6.400 12.600h3.200L8 10.400z" fill="#111"/></svg>
<svg class="ic" style="left:146px;top:116px" width="16" height="16" viewBox="0 0 16 16"><path d="M4.400 .6h4.400l2.800 2.800v4.400L8.800 10.600H4.400L1.600 7.800V3.400z" fill="url(#gl)" stroke="#0d5be0" stroke-width="1.300" stroke-linejoin="round"/><path d="M15.600 6v5.200l-3.400 3.400H7.400" fill="none" stroke="#222" stroke-width="1.200"/></svg>
<svg class="ic" style="left:169px;top:116px" width="16" height="16" viewBox="0 0 16 16"><path d="M1.400 2.600v12M15.600 2.600v12" stroke="#0d5be0" stroke-width="1.300"/><path d="M3.600 11.600h9.800" stroke="#111" stroke-width="1.300"/><path d="M2.200 11.600 5.800 9v5.200zM14.800 11.600 11.200 9v5.200z" fill="#111"/></svg>
<svg class="ic" style="left:192px;top:116px" width="16" height="16" viewBox="0 0 16 16"><text x="8.400" y="14.200" font-family="Liberation Serif,serif" font-weight="bold" font-size="17.500" text-anchor="middle" fill="#0a3ab0">A</text></svg>
<svg class="ic" style="left:222px;top:116px" width="16" height="16" viewBox="0 0 16 16"><path d="M1.400 10.600000000000001h10.600l3.600 3.200H5z" fill="url(#gwh)" stroke="#0d5be0" stroke-width="1.300" stroke-linejoin="round"/><path d="M1.400 6.4h10.600l3.600 3.200H5z" fill="url(#gwh)" stroke="#0d5be0" stroke-width="1.300" stroke-linejoin="round"/><path d="M1.400 2.2h10.600l3.600 3.200H5z" fill="url(#gwh)" stroke="#0d5be0" stroke-width="1.300" stroke-linejoin="round"/></svg>
<svg class="ic" style="left:250px;top:116px" width="16" height="16" viewBox="0 0 16 16"><ellipse cx="7.200" cy="7.400" rx="6.800" ry="4.400" transform="rotate(40 7.200 7.400)" fill="#e8e8e8" stroke="#2a2a2a" stroke-width="1.300"/><circle cx="7" cy="7.200" r="3.900" fill="url(#gball)"/><circle cx="12.600" cy="12.600" r="2.500" fill="url(#ggreen)"/></svg>
<svg class="ic" style="left:292px;top:116px" width="16" height="16" viewBox="0 0 16 16"><rect x="1.600" y="1.600" width="13" height="12.800" rx="1" fill="#ececec" stroke="#a8a8a8" stroke-width="1.200"/><path d="M1.600 4.600h13M5 1.600v12.800" stroke="#a8a8a8" stroke-width="1.100"/><circle cx="5" cy="4.600" r="1.300" fill="#f4f4f4" stroke="#a0a0a0" stroke-width=".8"/><text x="10" y="13.200" font-family="Liberation Sans,sans-serif" font-size="10.500" text-anchor="middle" fill="#a0a0a0">a</text></svg>
</div>
<!--/ICONS-->
<!--REST-->
<div class="hl" style="left:9px;top:138px;width:1007px;height:1px;background:#fdfdfd"></div>
<div class="abs" style="left:9px;top:140px;width:22px;height:600px;background:#f6f2ee"></div>
<div class="abs" style="left:31px;top:140px;width:4px;height:600px;background:#f0f0f0"></div>
<div class="abs" style="left:9px;top:141px;width:20px;height:58px;background:#f0f0f0;border:1px solid #8c8c8c;border-left:none"></div>
<div class="abs" style="left:9px;top:211px;width:20px;height:94px;background:#f0f0f0;border:1px solid #8c8c8c;border-left:none"></div>
<svg class="ic" style="left:11px;top:145px" width="16" height="16" viewBox="0 0 16 16"><rect x=".8" y=".8" width="13" height="11" rx="1.200" fill="#f4f8ff" stroke="#0d5be0" stroke-width="1.300"/><path d="M.8 2.400h13" stroke="#0d5be0" stroke-width="2.600"/><rect x="11.600" y=".6" width="2.400" height="2.400" fill="#e01818"/><path d="M2.600 5.600h1.400M2.600 8h1.400M2.600 10.400h1.400" stroke="#0a3ab0" stroke-width="1.200"/><rect x="5.800" y="7.800" width="9.400" height="6.800" rx="1" fill="#f4f8ff" stroke="#0d5be0" stroke-width="1.400"/><path d="M7.400 10h1.200M7.400 12.400h1.200" stroke="#0a3ab0" stroke-width="1.200"/><path d="M9.600 10h4M9.600 12.400h4" stroke="#333" stroke-width="1"/></svg>
<svg class="ic" style="left:11px;top:215px" width="16" height="16" viewBox="0 0 16 16"><path d="M.8 12.800V3q0-1 1-1h2.400l1 1.400h4.600" fill="url(#gf)" stroke="#0d5be0" stroke-width="1.200"/><path d="M.8 12.800h8" stroke="#0d5be0" stroke-width="1.200"/><path d="M11 5.600h4.400l-.8 7.600h-4z" fill="url(#gf)" stroke="#0d5be0" stroke-width="1"/><path d="M9.400 10.400 12.800 13.800" stroke="#111" stroke-width="2.200" stroke-linecap="round"/><circle cx="6.800" cy="7.200" r="3.900" fill="url(#gl)" stroke="#0d5be0" stroke-width="1.400"/></svg>
<div class="t cjk vt" style="left:9px;top:169px;">属性</div>
<div class="t cjk vt" style="left:9px;top:238.500px;">资源管理器</div>
<div class="abs" style="left:31px;top:139px;width:41px;height:20px;background:#f8f8f8;border-top:1px solid #a0a0a0;border-left:1px solid #a0a0a0;box-shadow:inset 1px 1px 0 #696969"></div>
<div class="t cjk" style="left:37.500px;top:144px;font-size:12px">图像</div>
<div class="t cjk" style="left:88.500px;top:143px;font-size:12px">结构</div>
<div class="vl" style="left:77px;top:139px;height:21px;background:#a0a0a0"></div><div class="vl" style="left:78px;top:139px;height:21px;background:#fff"></div>
<div class="vl" style="left:129px;top:139px;height:21px;background:#a0a0a0"></div><div class="vl" style="left:130px;top:139px;height:21px;background:#fff"></div>
<div class="combo" style="left:135px;top:143px;width:877px;height:18px"></div><div class="t" style="left:139px;top:146px;font-size:11px">Page01</div><div class="dd" style="left:1000px;top:152px"></div>
<div class="abs" id="canvas" style="left:35px;top:166px;width:978px;height:569px;background:#fff"></div>
<div class="hl" style="left:9px;top:739px;width:1007px;background:#a0a0a0"></div>
<div class="hl" style="left:9px;top:760px;width:1007px;background:#fff"></div>
<div class="vl" style="left:378px;top:740px;height:20px;background:#a0a0a0"></div><div class="vl" style="left:379px;top:740px;height:20px;background:#fff"></div>
<div class="vl" style="left:428px;top:740px;height:20px;background:#a0a0a0"></div><div class="vl" style="left:429px;top:740px;height:20px;background:#fff"></div>
<div class="vl" style="left:499px;top:740px;height:20px;background:#a0a0a0"></div><div class="vl" style="left:500px;top:740px;height:20px;background:#fff"></div>
<div class="vl" style="left:750px;top:740px;height:20px;background:#a0a0a0"></div><div class="vl" style="left:751px;top:740px;height:20px;background:#fff"></div>
<div class="vl" style="left:873px;top:740px;height:20px;background:#a0a0a0"></div><div class="vl" style="left:874px;top:740px;height:20px;background:#fff"></div>
<div class="vl" style="left:958px;top:740px;height:20px;background:#a0a0a0"></div><div class="vl" style="left:959px;top:740px;height:20px;background:#fff"></div>
<div class="t st" style="left:9.500px;top:743px;transform:scaleX(.88);transform-origin:0 0">1.PLX.HPGL</div>
<div class="t st" style="left:397px;top:743px">1/1</div>
<div class="pb" style="left:430px;top:741px;width:23px;height:20px"></div>
<svg class="ic" style="left:434px;top:743px" width="16" height="16" viewBox="0 0 16 16"><path d="M3.200 13.600V6.400q0-4.400 4.800-4.400" fill="none" stroke="#e02020" stroke-width="3"/><path d="M8 2q4.800 0 4.800 4.400v7.200" fill="none" stroke="#2a7af0" stroke-width="3"/><path d="M3.200 13.400V6.400q0-3.200 4.800-3.200" fill="none" stroke="#ffb0b0" stroke-width=".9"/><path d="M8 3.200q3.600 0 3.600 3.200v7" fill="none" stroke="#bcd8ff" stroke-width=".9"/><rect x="12" y="11.600" width="3.600" height="3.600" fill="#b00010"/></svg>
<svg class="ic" style="left:455px;top:743px" width="16" height="16" viewBox="0 0 16 16"><rect x="1.4" y="1.4" width="1.900" height="1.900" fill="#111"/><rect x="1.4" y="7.0" width="1.900" height="1.900" fill="#111"/><rect x="1.4" y="12.6" width="1.900" height="1.900" fill="#111"/><rect x="6.800000000000001" y="1.4" width="1.900" height="1.900" fill="#111"/><rect x="6.800000000000001" y="7.0" width="1.900" height="1.900" fill="#111"/><rect x="6.800000000000001" y="12.6" width="1.900" height="1.900" fill="#111"/><rect x="12.200000000000001" y="1.4" width="1.900" height="1.900" fill="#111"/><rect x="12.200000000000001" y="7.0" width="1.900" height="1.900" fill="#111"/><rect x="12.200000000000001" y="12.6" width="1.900" height="1.900" fill="#111"/></svg>
<svg class="ic" style="left:479px;top:743px" width="16" height="16" viewBox="0 0 16 16"><path d="M7.800 1.800v11M1.400 12.400h13" stroke="#0d5be0" stroke-width="1.300"/></svg>
<div class="t st" style="left:501px;top:743px;letter-spacing:.17px">(-882.0255; 987.4174; 0) <span class="cjk" style="font-size:12px;letter-spacing:0">毫米</span></div>
<div class="t st" style="left:875.500px;top:743px;letter-spacing:.12px">250.22 x 655.36</div>
<div class="t st" style="left:972px;top:743px;letter-spacing:.2px">00:16</div>
<!--/REST-->
<!--DRAW-->
<svg class="abs" id="drw" style="left:478px;top:338px" width="96" height="226" viewBox="0 0 96 226" shape-rendering="crispEdges"><path d="M17.3 7.3 L62.6 7.3 L61.7 24.5" fill="none" stroke="#000" stroke-width="1"/><path d="M17.3 7.3 L17.3 11.0 Q31.0 13.0 45.0 19.0 T58.5 24.5 L61.7 24.5" fill="none" stroke="#000" stroke-width="1"/><path d="M19.0 9.5 L60.3 9.5 L59.8 23.0" fill="none" stroke="#000" stroke-width="1" stroke-dasharray="1 1.5"/><rect x="47.0" y="11.0" width="8.0" height="7.0" fill="#000"/><rect x="46.0" y="14.0" width="6.0" height="5.0" fill="#000"/><path d="M9.4 19.2 Q24.7 16.0 39.4 17.3 Q33.6 29.5 21.6 39.0 Q12.5 30.6 9.4 19.2z" fill="none" stroke="#000" stroke-width="1"/><path d="M11.2 20.0 Q24.5 17.2 37.3 18.3 Q32.3 28.9 21.8 37.2 Q13.9 29.9 11.2 20.0z" fill="none" stroke="#000" stroke-width="1"/><rect x="20.0" y="26.0" width="6.0" height="5.0" fill="#000"/><rect x="22.0" y="24.0" width="3.0" height="3.0" fill="#000"/><rect x="20.0" y="29.0" width="10.0" height="3.0" fill="#000"/><path d="M21.6 40.3 Q33.0 47.1 39.4 56.5 Q25.1 60.5 9.8 59.0 Q10.3 48.1 21.6 40.3z" fill="none" stroke="#000" stroke-width="1"/><path d="M21.9 41.8 Q31.8 47.7 37.3 55.9 Q24.9 59.4 11.6 58.1 Q12.0 48.6 21.9 41.8z" fill="none" stroke="#000" stroke-width="1"/><rect x="20.0" y="46.0" width="8.0" height="6.0" fill="#000"/><rect x="20.0" y="49.0" width="10.0" height="3.0" fill="#000"/><path d="M33.7 35.0 Q41.5 24.3 54.4 24.8 Q57.0 40.1 55.3 54.4 Q41.8 50.2 33.7 35.0z" fill="none" stroke="#000" stroke-width="1"/><path d="M35.5 35.4 Q42.3 26.1 53.5 26.5 Q55.8 39.8 54.3 52.3 Q42.5 48.6 35.5 35.4z" fill="none" stroke="#000" stroke-width="1"/><rect x="45.5" y="38.0" width="3.0" height="4.5" fill="#000"/><rect x="37.0" y="34.5" width="3.5" height="2.0" fill="#000"/><path d="M57.5 69.0 L57.5 27.0 L63.0 27.0" fill="none" stroke="#000" stroke-width="1"/><path d="M59.5 29.0 L59.5 67.0" fill="none" stroke="#000" stroke-width="1" stroke-dasharray="1 1.5"/><path d="M77.8 7.5 L85.8 7.5 Q87.2 32.0 83.0 52.0 L80.6 66.5" fill="none" stroke="#000" stroke-width="1"/><path d="M77.8 7.5 Q73.0 15.0 62.3 18.7 L63.3 26.0 Q66.0 46.0 80.6 66.5" fill="none" stroke="#000" stroke-width="1.3"/><path d="M60.0 27.2 Q65.0 48.0 79.0 67.5" fill="none" stroke="#000" stroke-width="1"/><path d="M70.3 19.0 L70.3 58.0" fill="none" stroke="#000" stroke-width="1" stroke-dasharray="1 1.5"/><path d="M78.7 9.0 L78.7 64.0" fill="none" stroke="#000" stroke-width="1" stroke-dasharray="1 1.5"/><path d="M85.0 9.0 L85.0 52.0" fill="none" stroke="#000" stroke-width="1" stroke-dasharray="1.5 1.5"/><rect x="68.0" y="34.5" width="8.0" height="6.0" fill="#000"/><rect x="68.0" y="37.5" width="14.0" height="2.0" fill="#000"/><rect x="73.0" y="36.0" width="4.0" height="6.0" fill="#000"/><path d="M42.2 56.2 L54.4 61.0 L41.7 69.4z" fill="none" stroke="#000" stroke-width="1"/><path d="M43.8 58.8 L51.4 61.2 L43.4 66.6z" fill="none" stroke="#000" stroke-width="1"/><rect x="45.0" y="60.5" width="2.5" height="2.5" fill="#000"/><rect x="59.0" y="57.0" width="8.0" height="7.0" fill="#000"/><rect x="57.0" y="60.0" width="5.0" height="3.0" fill="#000"/><path d="M57.5 67.0 L74.0 67.5" fill="none" stroke="#000" stroke-width="1"/><path d="M58.0 69.0 L70.0 69.0" fill="none" stroke="#000" stroke-width="1"/><path d="M70.0 70.5 L83.0 66.5 L85.3 69.5 L85.3 73.0" fill="none" stroke="#000" stroke-width="1"/><path d="M75.0 58.0 L84.0 66.0" fill="none" stroke="#000" stroke-width="1" stroke-dasharray="1.5 1"/><path d="M15.0 71.6 L64.7 71.6 L58.0 79.3 L14.5 79.3z" fill="none" stroke="#000" stroke-width="1.2"/><rect x="36.5" y="73.0" width="8.5" height="1.3" fill="#000"/><rect x="42.0" y="73.0" width="3.0" height="4.0" fill="#000"/><rect x="39.0" y="75.7" width="6.0" height="1.3" fill="#000"/><path d="M61.0 78.0 Q69.4 67.2 83.4 67.4 Q86.8 83.1 84.8 97.8 Q70.1 93.4 61.0 78.0z" fill="none" stroke="#000" stroke-width="1"/><path d="M63.0 78.4 Q70.3 69.0 82.5 69.2 Q85.5 82.9 83.7 95.6 Q70.9 91.8 63.0 78.4z" fill="none" stroke="#000" stroke-width="1"/><rect x="76.0" y="80.0" width="3.5" height="4.0" fill="#000"/><path d="M19.0 80.5 L36.5 80.5 L27.5 94.0z" fill="none" stroke="#000" stroke-width="1"/><path d="M22.0 82.5 L33.5 82.5 L27.5 91.5z" fill="none" stroke="#000" stroke-width="1"/><path d="M10.8 97.8 L17.0 85.0 L29.0 97.8z" fill="none" stroke="#000" stroke-width="1"/><path d="M14.0 96.0 L17.4 88.5 L25.0 96.0z" fill="none" stroke="#000" stroke-width="1"/><rect x="16.0" y="86.0" width="6.0" height="3.0" fill="#000"/><rect x="17.0" y="88.0" width="3.0" height="5.0" fill="#000"/><rect x="22.0" y="89.0" width="4.0" height="5.0" fill="#000"/><rect x="25.0" y="84.5" width="3.0" height="2.0" fill="#000"/><path d="M51.0 81.4 Q66.1 84.1 75.0 98.8 Q66.3 111.6 51.5 112.4 Q49.6 96.8 51.0 81.4z" fill="none" stroke="#000" stroke-width="1"/><path d="M52.1 83.5 Q65.2 85.9 72.9 98.6 Q65.4 109.8 52.5 110.5 Q50.8 96.9 52.1 83.5z" fill="none" stroke="#000" stroke-width="1"/><rect x="56.0" y="95.0" width="4.5" height="4.0" fill="#000"/><path d="M24.8 104.4 Q33.1 89.5 47.3 86.6 Q48.5 101.4 46.4 116.6 Q32.6 116.5 24.8 104.4z" fill="none" stroke="#000" stroke-width="1"/><path d="M26.7 104.2 Q33.9 91.2 46.3 88.7 Q47.3 101.5 45.5 114.8 Q33.5 114.7 26.7 104.2z" fill="none" stroke="#000" stroke-width="1"/><rect x="37.5" y="99.0" width="4.0" height="5.0" fill="#000"/><rect x="30.0" y="105.0" width="3.5" height="3.5" fill="#000"/><path d="M48.5 81.0 L48.5 118.0" fill="none" stroke="#000" stroke-width="1.6"/><path d="M9.4 156.0 L9.4 113.3 L17.3 106.7 L17.3 155.5" fill="none" stroke="#000" stroke-width="1"/><rect x="11.5" y="127.0" width="4.5" height="2.5" fill="#000"/><rect x="11.5" y="127.0" width="2.0" height="8.5" fill="#000"/><path d="M26.7 111.9 L18.7 124.5 L35.0 124.5z" fill="none" stroke="#000" stroke-width="1"/><path d="M26.7 115.2 L21.8 122.8 L31.8 122.8z" fill="none" stroke="#000" stroke-width="1"/><rect x="24.5" y="117.0" width="3.5" height="3.5" fill="#000"/><path d="M79.7 100.0 Q68.0 117.0 61.9 141.4" fill="none" stroke="#000" stroke-width="1"/><path d="M79.7 100.0 Q85.0 117.0 85.8 156.4" fill="none" stroke="#000" stroke-width="1" stroke-dasharray="4 1"/><path d="M70.3 106.0 L70.3 148.0" fill="none" stroke="#000" stroke-width="1" stroke-dasharray="1 1.5"/><path d="M78.7 102.0 L78.7 156.0" fill="none" stroke="#000" stroke-width="1" stroke-dasharray="1 1.5"/><path d="M85.8 156.4 L80.6 156.4" fill="none" stroke="#000" stroke-width="1"/><rect x="68.0" y="125.5" width="6.0" height="4.5" fill="#000"/><rect x="68.0" y="129.0" width="14.0" height="2.5" fill="#000"/><rect x="75.0" y="124.5" width="3.0" height="3.5" fill="#000"/><path d="M38.0 130.2 Q43.9 118.5 55.0 114.0 Q58.9 127.6 60.5 141.4 Q47.7 141.8 38.0 130.2z" fill="none" stroke="#000" stroke-width="1"/><path d="M39.7 130.0 Q44.8 119.8 54.5 115.9 Q57.9 127.7 59.3 139.7 Q48.1 140.0 39.7 130.0z" fill="none" stroke="#000" stroke-width="1"/><path d="M55.0 114.0 L62.5 114.0 L60.5 141.4" fill="none" stroke="#000" stroke-width="1"/><rect x="52.0" y="126.0" width="4.0" height="4.0" fill="#000"/><path d="M20.2 127.0 Q33.2 126.3 40.8 136.7 Q32.8 151.6 19.2 155.5 Q18.3 141.5 20.2 127.0z" fill="none" stroke="#000" stroke-width="1"/><path d="M21.0 128.7 Q32.3 128.0 39.0 137.1 Q32.0 150.0 20.2 153.5 Q19.4 141.3 21.0 128.7z" fill="none" stroke="#000" stroke-width="1"/><rect x="25.0" y="138.0" width="7.0" height="8.0" fill="#000"/><rect x="25.0" y="138.0" width="11.0" height="4.0" fill="#000"/><rect x="33.0" y="134.0" width="3.5" height="2.0" fill="#000"/><path d="M17.3 155.5 L19.2 155.5" fill="none" stroke="#000" stroke-width="1"/><path d="M26.7 163.0 Q34.8 148.1 48.7 145.2 Q50.2 160.4 48.3 176.0 Q34.7 175.6 26.7 163.0z" fill="none" stroke="#000" stroke-width="1"/><path d="M28.6 162.8 Q35.6 149.8 47.7 147.3 Q49.0 160.5 47.4 174.1 Q35.5 173.8 28.6 162.8z" fill="none" stroke="#000" stroke-width="1"/><rect x="39.0" y="158.0" width="4.0" height="4.0" fill="#000"/><rect x="31.0" y="163.0" width="4.5" height="4.0" fill="#000"/><path d="M52.5 146.0 Q66.8 146.2 75.0 158.3 Q66.3 173.1 51.5 176.0 Q50.3 161.2 52.5 146.0z" fill="none" stroke="#000" stroke-width="1"/><path d="M53.4 147.8 Q65.9 148.0 73.0 158.5 Q65.4 171.4 52.6 173.9 Q51.5 161.1 53.4 147.8z" fill="none" stroke="#000" stroke-width="1"/><rect x="58.0" y="158.0" width="6.0" height="8.0" fill="#000"/><rect x="58.0" y="161.0" width="12.0" height="3.0" fill="#000"/><rect x="60.0" y="157.0" width="8.0" height="2.0" fill="#000"/><path d="M50.3 145.0 L50.3 177.0" fill="none" stroke="#000" stroke-width="1.6"/><path d="M61.9 141.4 Q72.0 146.0 80.6 156.4" fill="none" stroke="#000" stroke-width="1.3"/><path d="M8.4 158.3 L25.3 158.3 L16.0 169.0z" fill="none" stroke="#000" stroke-width="1"/><path d="M12.0 160.3 L21.5 160.3 L16.3 166.3z" fill="none" stroke="#000" stroke-width="1"/><path d="M16.0 169.0 L25.0 182.0" fill="none" stroke="#000" stroke-width="1"/><path d="M16.0 169.0 L11.0 175.0" fill="none" stroke="#000" stroke-width="1"/><rect x="15.5" y="161.0" width="3.0" height="2.5" fill="#000"/><rect x="21.0" y="166.0" width="4.0" height="4.0" fill="#000"/><path d="M79.7 159.2 Q68.0 177.0 62.0 205.0" fill="none" stroke="#000" stroke-width="1"/><path d="M79.7 159.2 Q85.2 177.0 85.8 217.0" fill="none" stroke="#000" stroke-width="1" stroke-dasharray="4 1"/><path d="M70.3 165.0 L70.3 207.0" fill="none" stroke="#000" stroke-width="1" stroke-dasharray="1 1.5"/><path d="M78.7 161.0 L78.7 215.0" fill="none" stroke="#000" stroke-width="1" stroke-dasharray="1 1.5"/><rect x="68.0" y="186.0" width="6.0" height="5.5" fill="#000"/><rect x="68.0" y="189.5" width="14.0" height="2.5" fill="#000"/><rect x="74.5" y="183.5" width="3.0" height="4.5" fill="#000"/><path d="M62.0 205.0 L69.4 206.0 Q75.0 211.0 79.0 217.3 L85.8 217.3" fill="none" stroke="#000" stroke-width="1.3"/><path d="M79.5 215.5 L85.0 215.5" fill="none" stroke="#000" stroke-width="1" stroke-dasharray="1 1.5"/><path d="M6.0 217.5 L6.0 176.5 L14.0 171.4 L14.0 217.5z" fill="none" stroke="#000" stroke-width="1.2"/><rect x="8.5" y="191.0" width="4.5" height="2.5" fill="#000"/><rect x="8.5" y="191.0" width="2.0" height="9.0" fill="#000"/><path d="M7.5 215.5 L13.0 215.5" fill="none" stroke="#000" stroke-width="1" stroke-dasharray="1 1.5"/><path d="M20.2 179.3 Q34.9 183.1 44.0 198.0 Q35.2 209.9 21.0 210.7 Q19.2 194.8 20.2 179.3z" fill="none" stroke="#000" stroke-width="1"/><path d="M21.3 181.5 Q34.0 184.8 42.0 197.7 Q34.3 208.1 22.0 208.8 Q20.4 195.0 21.3 181.5z" fill="none" stroke="#000" stroke-width="1"/><rect x="26.0" y="193.0" width="7.0" height="8.0" fill="#000"/><rect x="26.0" y="195.0" width="12.0" height="3.0" fill="#000"/><rect x="28.0" y="192.0" width="7.0" height="2.0" fill="#000"/><path d="M36.0 179.3 Q50.2 178.2 64.7 179.3 Q64.1 193.1 52.5 201.4 Q38.8 193.3 36.0 179.3z" fill="none" stroke="#000" stroke-width="1"/><path d="M38.0 180.3 Q50.3 179.3 62.9 180.3 Q62.4 192.2 52.3 199.5 Q40.4 192.4 38.0 180.3z" fill="none" stroke="#000" stroke-width="1"/><rect x="44.0" y="187.0" width="6.0" height="8.0" fill="#000"/><rect x="44.0" y="190.0" width="12.0" height="3.0" fill="#000"/><rect x="49.0" y="184.0" width="3.0" height="2.0" fill="#000"/><path d="M14.0 179.0 L36.0 179.0" fill="none" stroke="#000" stroke-width="1"/><path d="M16.4 213.0 L16.4 217.3 L62.6 217.3 L61.4 202.0" fill="none" stroke="#000" stroke-width="1.3"/><path d="M16.4 213.0 L21.0 211.5 Q37.0 209.0 59.0 202.5 L61.4 202.0" fill="none" stroke="#000" stroke-width="1"/><path d="M19.0 215.3 L60.5 215.3 L60.0 204.0" fill="none" stroke="#000" stroke-width="1" stroke-dasharray="1 1.5"/><rect x="48.0" y="208.0" width="7.0" height="8.0" fill="#000"/><rect x="50.0" y="206.0" width="6.0" height="3.0" fill="#000"/><rect x="16.4" y="213.0" width="3.1" height="4.0" fill="#000"/></svg>
<!--/DRAW-->
<!--STATUS-->
</body>
</html>
